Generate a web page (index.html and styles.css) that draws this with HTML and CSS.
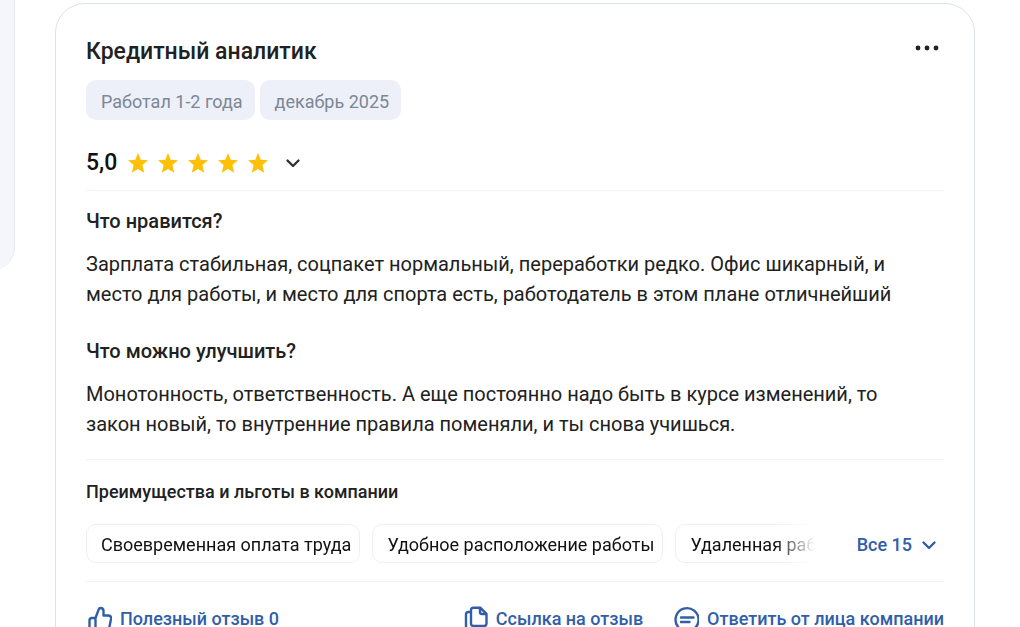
FILE: index.html
```html
<!DOCTYPE html>
<html lang="ru">
<head>
<meta charset="utf-8">
<meta name="viewport" content="width=device-width, initial-scale=1">
<title>Кредитный аналитик — отзыв</title>
<link rel="stylesheet" href="styles.css">
</head>
<body>
<svg class="sprite" aria-hidden="true">
  <symbol id="star" viewBox="0 0 20 20"><path d="M10 0l2.700 6.700 7.300.5-5.600 4.700 1.800 7.900L10 15.900 3.800 19.800l1.800-7.900L0 7.200l7.300-.5z"/></symbol>
  <symbol id="chevron" viewBox="0 0 16 16"><path d="M2.500 5.500L8 11l5.500-5.500" fill="none" stroke="currentColor" stroke-width="2.400" stroke-linecap="round" stroke-linejoin="round"/></symbol>
</svg>
<div class="page">
  <aside class="side"></aside>
  <main class="card">
    <header class="head">
      <h1 class="title">Кредитный аналитик</h1>
      <button class="more" type="button" aria-label="Ещё">
        <svg width="24" height="6" viewBox="0 0 24 6" fill="currentColor"><circle cx="3" cy="3" r="2.400"/><circle cx="12" cy="3" r="2.400"/><circle cx="21" cy="3" r="2.400"/></svg>
      </button>
    </header>
    <div class="tags">
      <span class="tag">Работал 1-2 года</span>
      <span class="tag">декабрь 2025</span>
    </div>
    <div class="rating">
      <span class="score">5,0</span>
      <span class="stars">
        <svg class="star"><use href="#star"/></svg>
        <svg class="star"><use href="#star"/></svg>
        <svg class="star"><use href="#star"/></svg>
        <svg class="star"><use href="#star"/></svg>
        <svg class="star"><use href="#star"/></svg>
      </span>
      <button class="expand" type="button" aria-label="Подробнее"><svg class="chevron"><use href="#chevron"/></svg></button>
    </div>
    <section class="review">
      <h2 class="question">Что нравится?</h2>
      <p class="answer">Зарплата стабильная, соцпакет нормальный, переработки редко. Офис шикарный, и место для работы, и место для спорта есть, работодатель в этом плане отличнейший</p>
      <h2 class="question">Что можно улучшить?</h2>
      <p class="answer">Монотонность, ответственность. А еще постоянно надо быть в курсе изменений, то закон новый, то внутренние правила поменяли, и ты снова учишься.</p>
    </section>
    <section class="benefits">
      <h3 class="subtitle">Преимущества и льготы в компании</h3>
      <div class="benefit-row">
        <div class="chips">
          <span class="chip">Своевременная оплата труда</span>
          <span class="chip">Удобное расположение работы</span>
          <span class="chip">Удаленная работа</span>
        </div>
        <button class="all" type="button">Все 15<svg class="chevron"><use href="#chevron"/></svg></button>
      </div>
    </section>
    <footer class="actions">
      <button class="action useful" type="button">
        <svg class="icon" viewBox="0 0 26 26"><path d="M9.500 12H6Q3.500 12 3.500 14.500V21Q3.500 23.500 6 23.500H9.500zM9.500 12l3.300-8.800Q13.300 2 14.500 2Q17.500 2 17.500 5V9.500H22Q25.500 9.500 25 13L23.500 20.500Q23 23.500 20 23.500H9.500"/></svg>
        Полезный отзыв 0
      </button>
      <button class="action" type="button">
        <svg class="icon" viewBox="0 0 26 26"><path d="M11.500 1.800h7l6 6v9.700q0 2.500-2.500 2.500H11.500q-2.500 0-2.500-2.500V4.300q0-2.500 2.500-2.500zM18 2v4q0 2 2 2h4M9 6H6.500Q4 6 4 8.500V22q0 2.500 2.500 2.500h10q2.500 0 2.500-2.500v-2"/></svg>
        Ссылка на отзыв
      </button>
      <button class="action" type="button">
        <svg class="icon" viewBox="0 0 26 26"><path d="M4 24.500l1.200-3.500A11.500 11.500 0 1 1 9 24zM8 11.500h12.500M8 16h8.500"/></svg>
        Ответить от лица компании
      </button>
    </footer>
  </main>
</div>
</body>
</html>
```
FILE: styles.css
```css
* { box-sizing: border-box; }
body {
  margin: 0;
  background: #fff;
  color: #212121;
  font-family: Roboto, "Liberation Sans", sans-serif;
}
h1, h2, h3, p { margin: 0; font-weight: 500; }
button {
  margin: 0;
  padding: 0;
  border: 0;
  background: none;
  color: inherit;
  font: inherit;
  cursor: pointer;
}
svg { flex: none; }
.sprite { display: none; }
.page {
  display: flex;
  align-items: flex-start;
  gap: 40px;
  height: 100vh;
  padding-right: 45px;
  overflow: hidden;
}
.side {
  flex: none;
  width: 45px;
  height: 270px;
  margin-left: -30px;
  border: 1px solid #e6e9f2;
  border-width: 0 1px 0 0;
  border-radius: 0 0 30px 30px;
  background: #f5f6fc;
}
.card {
  flex: 1;
  min-width: 0;
  margin-top: 3px;
  padding: 30px 30px 32px;
  border: 1px solid #dde2ea;
  border-radius: 30px;
}
.head {
  display: flex;
  justify-content: space-between;
  align-items: flex-start;
}
.title { font-size: 23px; line-height: 36px; }
.more { display: flex; padding: 11px 5px 0; }
.tags { display: flex; gap: 5px; margin-top: 10px; }
.tag {
  padding: 10px 12px 6px 15px;
  border-radius: 10px;
  background: #edf0f8;
  color: #7c8795;
  font-size: 18px;
  line-height: 24px;
}
.rating {
  display: flex;
  align-items: center;
  padding: 27px 0 11px;
  border-bottom: 1px solid #f1f3f9;
}
.score { color: #111; font-size: 23px; font-weight: 500; line-height: 32px; }
.stars { display: flex; gap: 10px; margin-left: 11px; }
.star { width: 20px; height: 20px; fill: #ffc107; }
.chevron { width: 16px; height: 16px; }
.expand { display: flex; margin-left: 17px; color: #333; }
.review {
  padding: 15px 0 20px;
  border-bottom: 1px solid #f1f3f9;
}
.question { font-size: 20px; line-height: 30px; }
.answer { margin-top: 13px; padding-right: 20px; font-size: 20px; font-weight: 400; line-height: 30px; }
.answer + .question { margin-top: 27px; }
.benefits {
  padding: 20px 0 18px;
  border-bottom: 1px solid #f1f3f9;
}
.subtitle { font-size: 18px; line-height: 24px; }
.benefit-row { display: flex; align-items: center; margin-top: 20px; }
.chips {
  display: flex;
  flex: 1;
  gap: 12px;
  min-width: 0;
  overflow: hidden;
  mask-image: linear-gradient(to right, #000 calc(100% - 40px), transparent);
}
.chip {
  flex: none;
  padding: 8px 8px 5px 14px;
  border: 1px solid #edeff8;
  border-radius: 10px;
  color: #111;
  font-size: 18px;
  line-height: 24px;
}
.all {
  display: flex;
  flex: none;
  align-items: center;
  gap: 9px;
  margin-left: 42px;
  padding: 2px 7px 0 0;
  color: #315ea8;
  font-size: 18px;
  font-weight: 500;
  line-height: 24px;
}
.actions { display: flex; gap: 30px; padding-top: 24px; }
.action {
  display: flex;
  align-items: center;
  gap: 8px;
  color: #315ea8;
  font-size: 18px;
  font-weight: 500;
  line-height: 26px;
  white-space: nowrap;
}
.useful { margin-right: auto; }
.icon {
  width: 26px;
  height: 26px;
  fill: none;
  stroke: currentColor;
  stroke-width: 2.400;
  stroke-linecap: round;
  stroke-linejoin: round;
}
```
